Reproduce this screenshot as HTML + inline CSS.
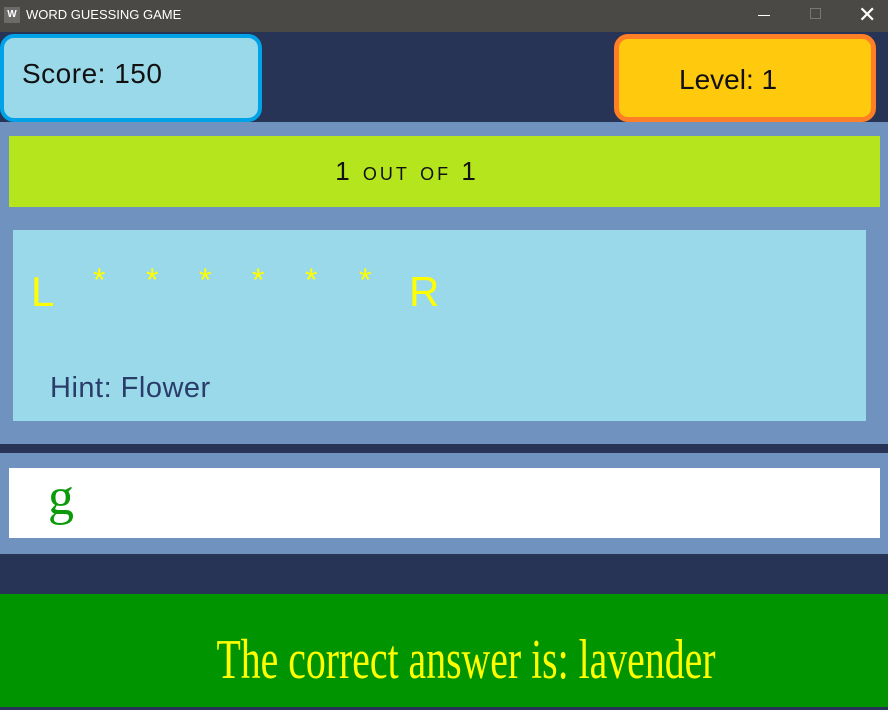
<!DOCTYPE html>
<html><head><style>
*{margin:0;padding:0;box-sizing:border-box}
body{width:888px;height:710px;background:#283456;position:relative;overflow:hidden;font-family:"Liberation Sans",sans-serif}
.a{position:absolute}
.s{position:absolute;top:262px;font-size:32px;color:#ffff00}
</style></head><body>
<div class="a" style="left:0;top:0;width:888px;height:32px;background:#4b4946"></div>
<div class="a" style="left:4px;top:7px;width:16px;height:16px;background:#6d6b69;color:#fff;font-size:10px;font-weight:bold;text-align:center;line-height:16px">W</div>
<div class="a" style="left:26px;top:7px;color:#fff;font-size:13px">WORD GUESSING GAME</div>
<div class="a" style="left:758px;top:15px;width:12px;height:1px;background:#fff"></div>
<div class="a" style="left:810px;top:8px;width:11px;height:11px;border:1px solid #777"></div>
<div class="a" style="left:858px;top:2px;color:#fff;font-size:22px">✕</div>

<div class="a" style="left:0;top:34px;width:262px;height:88px;background:#99d9ea;border:4px solid #00a2e8;border-radius:14px"></div>
<div class="a" style="left:22px;top:58px;font-size:28px;color:#111;letter-spacing:0.5px">Score: 150</div>
<div class="a" style="left:614px;top:34px;width:262px;height:88px;background:#ffc90e;border:5px solid #ff7f27;border-radius:14px"></div>
<div class="a" style="left:679px;top:64px;font-size:28px;color:#111">Level: 1</div>

<div class="a" style="left:0;top:122px;width:888px;height:322px;background:#7092be"></div>
<div class="a" style="left:9px;top:136px;width:871px;height:71px;background:#b5e61d"></div>
<div class="a" style="left:0;top:156px;width:814px;text-align:center;font-size:26px;color:#111;font-variant:small-caps;letter-spacing:3px">1 out of 1</div>
<div class="a" style="left:13px;top:230px;width:853px;height:191px;background:#99d9ea"></div>
<div class="a" style="left:31px;top:268px;font-size:42px;color:#ffff00">L</div>
<div class="s" style="left:93px">*</div>
<div class="s" style="left:146px">*</div>
<div class="s" style="left:199px">*</div>
<div class="s" style="left:252px">*</div>
<div class="s" style="left:305px">*</div>
<div class="s" style="left:359px">*</div>
<div class="a" style="left:409px;top:268px;font-size:42px;color:#ffff00">R</div>
<div class="a" style="left:50px;top:372px;font-size:29px;color:#2a3d6a;letter-spacing:0.5px">Hint: Flower</div>

<div class="a" style="left:0;top:453px;width:888px;height:101px;background:#7092be"></div>
<div class="a" style="left:9px;top:468px;width:871px;height:70px;background:#fff"></div>
<div class="a" style="left:48px;top:468px;font-family:'Liberation Serif',serif;font-size:52px;color:#0a9a0a">g</div>

<div class="a" style="left:0;top:594px;width:888px;height:113px;background:#009400"></div>
<div class="a" style="left:22px;top:628px;width:888px;text-align:center;font-family:'Liberation Serif',serif;font-size:56px;color:#ffff00;transform:scaleX(0.71);transform-origin:444px 0;white-space:nowrap">The correct answer is: lavender</div>
</body></html>
